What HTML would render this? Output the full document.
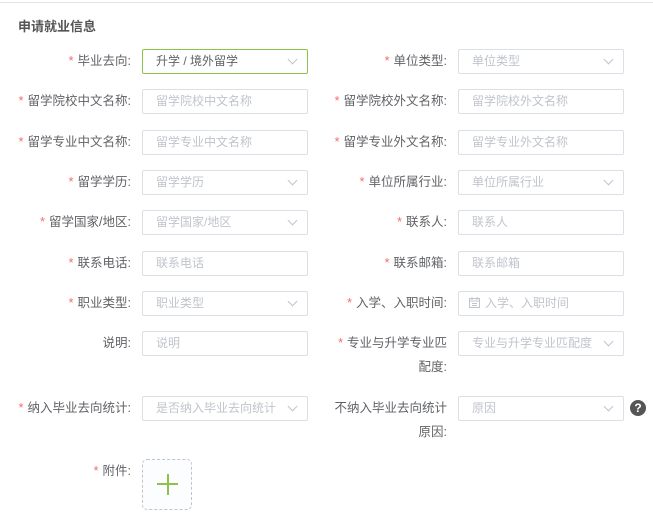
<!DOCTYPE html>
<html><head><meta charset="utf-8"><style>
*{box-sizing:border-box;margin:0;padding:0}
body{width:653px;height:526px;background:#fff;font-family:"Liberation Sans","Noto Sans CJK SC",sans-serif;font-size:12px;color:#606266;position:relative;overflow:hidden}
.top{position:absolute;left:0;top:2px;width:653px;height:1px;background:#e4e4e4}
.title{position:absolute;left:18px;top:16px;font-size:13px;font-weight:bold;color:#555}
.lab{position:absolute;text-align:right;line-height:24px;white-space:nowrap;font-size:12.5px}
.lab i{font-style:normal;color:#f56c6c;margin-right:4px}
.in{position:absolute;width:166px;height:25px;border:1px solid #dcdfe6;border-radius:2px;color:#c0c4cc;line-height:23px;padding-left:13px;white-space:nowrap;overflow:hidden}
.sel::after{content:"";position:absolute;right:11px;top:6px;width:6px;height:6px;border-right:1px solid #c0c4cc;border-bottom:1px solid #c0c4cc;transform:rotate(45deg)}
.act{border-color:#8bc34a;color:#606266}
</style></head><body>
<div class="top"></div>
<div class="title">申请就业信息</div>

<div class="lab" style="right:522px;top:49px"><i>*</i>毕业去向:</div>
<div class="in sel act" style="left:142px;top:49px">升学 / 境外留学</div>
<div class="lab" style="right:206px;top:49px"><i>*</i>单位类型:</div>
<div class="in sel" style="left:458px;top:49px">单位类型</div>

<div class="lab" style="right:522px;top:89px"><i>*</i>留学院校中文名称:</div>
<div class="in" style="left:142px;top:89px">留学院校中文名称</div>
<div class="lab" style="right:206px;top:89px"><i>*</i>留学院校外文名称:</div>
<div class="in" style="left:458px;top:89px">留学院校外文名称</div>

<div class="lab" style="right:522px;top:130px"><i>*</i>留学专业中文名称:</div>
<div class="in" style="left:142px;top:130px">留学专业中文名称</div>
<div class="lab" style="right:206px;top:130px"><i>*</i>留学专业外文名称:</div>
<div class="in" style="left:458px;top:130px">留学专业外文名称</div>

<div class="lab" style="right:522px;top:170px"><i>*</i>留学学历:</div>
<div class="in sel" style="left:142px;top:170px">留学学历</div>
<div class="lab" style="right:206px;top:170px"><i>*</i>单位所属行业:</div>
<div class="in sel" style="left:458px;top:170px">单位所属行业</div>

<div class="lab" style="right:522px;top:210px"><i>*</i>留学国家/地区:</div>
<div class="in sel" style="left:142px;top:210px">留学国家/地区</div>
<div class="lab" style="right:206px;top:210px"><i>*</i>联系人:</div>
<div class="in" style="left:458px;top:210px">联系人</div>

<div class="lab" style="right:522px;top:251px"><i>*</i>联系电话:</div>
<div class="in" style="left:142px;top:251px">联系电话</div>
<div class="lab" style="right:206px;top:251px"><i>*</i>联系邮箱:</div>
<div class="in" style="left:458px;top:251px">联系邮箱</div>

<div class="lab" style="right:522px;top:291px"><i>*</i>职业类型:</div>
<div class="in sel" style="left:142px;top:291px">职业类型</div>
<div class="lab" style="right:206px;top:291px"><i>*</i>入学、入职时间:</div>
<div class="in" style="left:458px;top:291px;padding-left:10px"><svg width="11" height="11" viewBox="0 0 11 11" style="vertical-align:-1px;margin-right:5px"><rect x="0.5" y="1.5" width="10" height="9" fill="none" stroke="#c0c4cc"/><path d="M0.5 4h10M3 0v3M8 0v3M3 6.5h5M3 8.5h5" stroke="#c0c4cc"/></svg>入学、入职时间</div>

<div class="lab" style="right:522px;top:331px">说明:</div>
<div class="in" style="left:142px;top:331px">说明</div>
<div class="lab" style="right:206px;top:331px;text-align:right"><i>*</i>专业与升学专业匹<br>配度:</div>
<div class="in sel" style="left:458px;top:331px">专业与升学专业匹配度</div>

<div class="lab" style="right:522px;top:396px"><i>*</i>纳入毕业去向统计:</div>
<div class="in sel" style="left:142px;top:396px">是否纳入毕业去向统计</div>
<div class="lab" style="right:206px;top:396px">不纳入毕业去向统计<br>原因:</div>
<div class="in sel" style="left:458px;top:396px">原因</div>
<div style="position:absolute;left:630px;top:400px;width:16px;height:16px;border-radius:50%;background:#555;color:#fff;font-weight:bold;font-size:12px;text-align:center;line-height:16px">?</div>

<div class="lab" style="right:522px;top:459px"><i>*</i>附件:</div>
<div style="position:absolute;left:142px;top:459px;width:50px;height:51px;border:1px dashed #c0c4cc;border-radius:5px;background:#fbfdff">
<div style="position:absolute;left:14px;top:23px;width:21px;height:2px;background:#8bc34a"></div>
<div style="position:absolute;left:23.5px;top:14px;width:2px;height:21px;background:#8bc34a"></div>
</div>
</body></html>
